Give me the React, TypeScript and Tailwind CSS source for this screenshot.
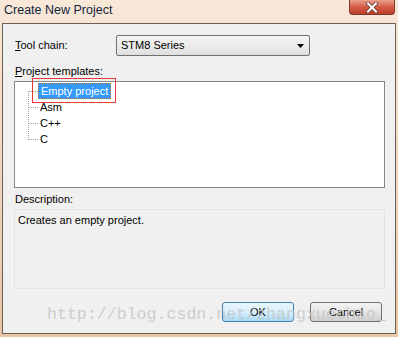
import React from "react";

const ui = "font-['Liberation_Sans',Arial,sans-serif] text-[11px] text-black";

const TreeLines = () => (
  <svg className="absolute left-0 top-0" width="40" height="70" shapeRendering="crispEdges">
    <g stroke="#a0a0a0" strokeWidth="1" strokeDasharray="1 1">
      <line x1="13.5" y1="9" x2="13.5" y2="58" />
      {[9, 25, 41, 57].map((y) => (
        <line key={y} x1="14" y1={y + 0.5} x2="24" y2={y + 0.5} />
      ))}
    </g>
  </svg>
);

const TreeItem = ({ label, selected }: { label: string; selected?: boolean }) => (
  <div className="flex h-[16px] items-center pl-[23px]">
    {selected ? (
      <span className="h-[16px] border border-dotted border-[#c8782c] bg-[#3399ff] px-[2px] leading-[14px] text-white">
        {label}
      </span>
    ) : (
      <span className="px-[2px] leading-[16px]">{label}</span>
    )}
  </div>
);

export default function App() {
  return (
    <div className={`relative h-[337px] w-[398px] overflow-hidden bg-gradient-to-b from-[#f8e8d8] via-[#f1d6bd] to-[#e9c4a2] ${ui}`}>
      {/* title bar */}
      <div className="flex h-[23px] items-start justify-between">
        <div className="pl-[4px] pt-[3px] text-[12.5px] leading-[14px] text-[#14263c]">Create New Project</div>
        <div className="mr-[3px] flex h-[15px] w-[46px] items-center justify-center rounded-b-[4px] border border-t-0 border-[#7c3b2c] bg-gradient-to-b from-[#e9a08e] via-[#d45a44] to-[#c0402a]">
          <svg width="12" height="11" viewBox="0 0 12 11">
            <path d="M2 1.5 L10 9.5 M10 1.5 L2 9.5" stroke="#5b3a36" strokeWidth="3.6" strokeLinecap="square" />
            <path d="M2 1.5 L10 9.5 M10 1.5 L2 9.5" stroke="#ffffff" strokeWidth="2" strokeLinecap="square" />
          </svg>
        </div>
      </div>

      {/* client area */}
      <div className="mx-[2px] h-[311px] border border-[#6b6057] bg-[#f0f0f0]">
        <div className="mt-[11px] flex h-[21px] items-center">
          <div className="w-[113px] pl-[12px]">
            <span className="underline decoration-1 underline-offset-1">T</span>ool chain:
          </div>
          <div className="flex h-[21px] w-[194px] items-center justify-between rounded-[2px] border border-[#707070] bg-gradient-to-b from-[#f3f3f3] via-[#ececec] to-[#dfdfdf] pl-[4px] pr-[5px]">
            <span>STM8 Series</span>
            <svg width="7" height="4" viewBox="0 0 7 4">
              <path d="M0 0 H7 L3.5 4 Z" fill="#000" />
            </svg>
          </div>
        </div>

        <div className="mt-[9px] h-[13px] pl-[12px] leading-[13px]">
          <span className="underline decoration-1 underline-offset-1">P</span>roject templates:
        </div>
        <div className="relative ml-[11px] mt-[3px] h-[107px] w-[371px] border border-[#828790] bg-white pt-[1px]">
          <TreeLines />
          <TreeItem label="Empty project" selected />
          <TreeItem label="Asm" />
          <TreeItem label="C++" />
          <TreeItem label="C" />
        </div>

        <div className="mt-[5px] h-[13px] pl-[12px] leading-[13px]">Description:</div>
        <div className="ml-[11px] mt-[3px] h-[80px] w-[371px] rounded-[1px] border border-[#dde3ea] bg-[#f0f0f0] pl-[3px] pt-[2px]">
          Creates an empty project.
        </div>

        <div className="mt-[13px] flex h-[20px] pl-[219px]">
          <div className="flex h-[20px] w-[72px] items-center justify-center rounded-[3px] border border-[#3c7fb1] bg-gradient-to-b from-[#eaf6fd] via-[#d9f0fc] to-[#a7d9f5]">
            OK
          </div>
          <div className="ml-[16px] flex h-[20px] w-[72px] items-center justify-center rounded-[3px] border border-[#707070] bg-gradient-to-b from-[#f4f4f4] via-[#e6e6e6] to-[#d0d0d0]">
            Cancel
          </div>
        </div>
      </div>

      {/* red annotation box */}
      <div className="pointer-events-none absolute left-[32px] top-[78px] h-[25px] w-[84px] border border-[#e8383c]" />

      {/* watermark */}
      <div className="pointer-events-none absolute left-[47px] top-[305px] whitespace-nowrap font-['Liberation_Mono',monospace] text-[16.6px] leading-[20px] text-[#c4c4c4]/80">
        http://blog.csdn.net/zhangxuechao_
      </div>
    </div>
  );
}
